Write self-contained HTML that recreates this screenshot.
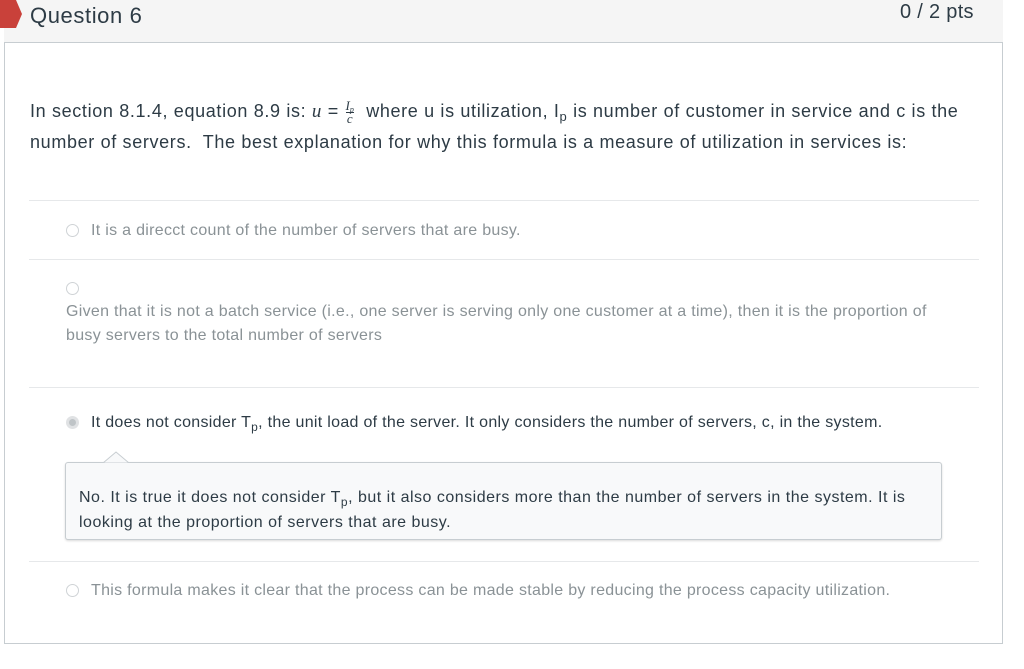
<!DOCTYPE html>
<html><head><meta charset="utf-8"><style>
body{margin:0;background:#fff;width:1024px;height:669px;overflow:hidden;font-family:"Liberation Sans",sans-serif;}
.box{position:absolute;left:4px;top:0;width:999px;height:644px;border:1px solid #c7cdd1;border-top:none;box-sizing:border-box;}
.hdr{position:absolute;left:4px;top:0;width:999px;height:43px;background:#f5f5f5;border-bottom:1px solid #c7cdd1;box-sizing:border-box;}
.t{position:absolute;white-space:nowrap;}
.hr{position:absolute;left:29px;width:950px;height:1px;background:#e6e8ea;}
.radio{position:absolute;width:13px;height:13px;border:1px solid #cfd3d6;border-radius:50%;box-sizing:border-box;background:#fff;}
.ans{font-size:16px;letter-spacing:0.3px;color:#8a9296;}
sub{line-height:0;vertical-align:-4px;}
</style></head><body>
<div class="box"></div>
<div class="hdr"></div>
<svg style="position:absolute;left:0;top:0" width="24" height="30"><polygon points="0,0 16,0 22,14 16,28 0,28" fill="#c9413a"/></svg>
<div class="t" style="left:30px;top:3px;font-size:22px;letter-spacing:0.6px;color:#2d3b45;">Question 6</div>
<div class="t" style="left:900px;top:1px;font-size:20px;letter-spacing:0.3px;color:#2d3b45;">0 / 2 pts</div>
<div class="t" style="left:30px;top:96px;font-size:18px;letter-spacing:0.65px;color:#2d3b45;line-height:31px;">In section 8.1.4, equation 8.9 is: <i style="font-family:'Liberation Serif',serif;font-size:19px">u</i> = <span style="display:inline-block;vertical-align:middle;font-family:'Liberation Serif',serif;font-size:13px;line-height:12px;text-align:center;letter-spacing:0;padding:0 1px;"><i>I<sub style="font-size:8px;vertical-align:-2px">p</sub></i><br><span style="display:block;border-top:1px solid #2d3b45;"><i>c</i></span></span>&nbsp; where u is utilization, I<sub style="font-size:13px">p</sub> is number of customer in service and c is the<br>number of servers.&nbsp; The best explanation for why this formula is a measure of utilization in services is:</div>
<div class="hr" style="top:200px"></div>
<div class="radio" style="left:66px;top:224px"></div>
<div class="t ans" style="left:91px;top:222px;">It is a direcct count of the number of servers that are busy.</div>
<div class="hr" style="top:259px"></div>
<div class="radio" style="left:66px;top:282px"></div>
<div class="t ans" style="left:66px;top:300px;line-height:24px;">Given that it is not a batch service (i.e., one server is serving only one customer at a time), then it is the proportion of<br>busy servers to the total number of servers</div>
<div class="hr" style="top:387px"></div>
<div class="radio" style="left:66px;top:416px;border:3px solid #e0e2e4;background:#bfc4c7"></div>
<div class="t" style="left:91px;top:414px;font-size:16px;letter-spacing:0.3px;color:#2d3b45;">It does not consider T<sub style="font-size:12px">p</sub>, the unit load of the server. It only considers the number of servers, c, in the system.</div>
<div style="position:absolute;left:65px;top:462px;width:877px;height:78px;border:1px solid #c7cdd1;border-radius:3px;background:#f8f9fa;box-shadow:0 1px 2px rgba(0,0,0,.15);box-sizing:border-box;"></div>
<svg style="position:absolute;left:103px;top:451px" width="26" height="13"><polygon points="0,12 13,1 26,12" fill="#f8f9fa" stroke="#c7cdd1"/><rect x="0" y="12" width="26" height="2" fill="#f8f9fa"/></svg>
<div class="t" style="left:79px;top:485px;font-size:16px;letter-spacing:0.5px;color:#2d3b45;line-height:25px;">No. It is true it does not consider T<sub style="font-size:12px">p</sub>, but it also considers more than the number of servers in the system. It is<br>looking at the proportion of servers that are busy.</div>
<div class="hr" style="top:561px"></div>
<div class="radio" style="left:66px;top:584px"></div>
<div class="t ans" style="left:91px;top:582px;">This formula makes it clear that the process can be made stable by reducing the process capacity utilization.</div>
</body></html>
